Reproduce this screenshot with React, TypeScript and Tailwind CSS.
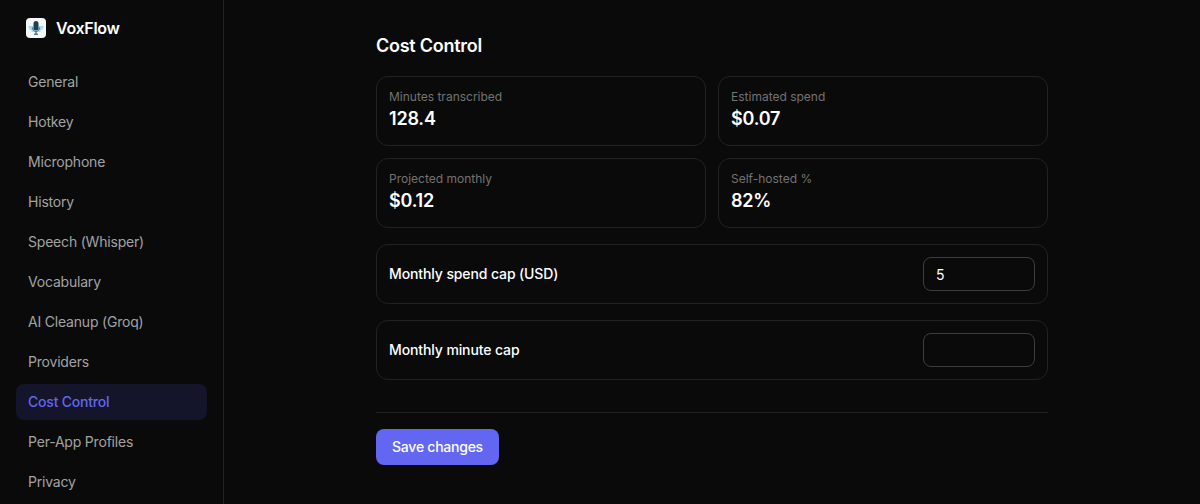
const navItems = [
  'General',
  'Hotkey',
  'Microphone',
  'History',
  'Speech (Whisper)',
  'Vocabulary',
  'AI Cleanup (Groq)',
  'Providers',
  'Cost Control',
  'Per-App Profiles',
  'Privacy',
];

const stats = [
  { label: 'Minutes transcribed', value: '128.4' },
  { label: 'Estimated spend', value: '$0.07' },
  { label: 'Projected monthly', value: '$0.12' },
  { label: 'Self-hosted %', value: '82%' },
];

function Logo() {
  return (
    <svg className="w-5 h-5 shrink-0" viewBox="0 0 20 20">
      <rect width="20" height="20" rx="4" fill="#f4f8f9" />
      <path d="M2.5 9h5M12.5 9h5M3.5 11h4.5M12 11h4.5M5.5 13h3M11.500 13h3" stroke="#4fc3d9" strokeWidth="1" />
      <rect x="7.500" y="3" width="5" height="9.500" rx="2.500" fill="#1f3f57" />
      <path d="M6.500 9.500c0 2.300 1.500 4 3.500 4s3.500-1.700 3.500-4" fill="none" stroke="#2b5069" strokeWidth="0.8" />
      <path d="M10 13.500v2.300M8 16.200h4" stroke="#1f3f57" strokeWidth="1" />
    </svg>
  );
}

function LimitRow({ label, value }: { label: string; value: string }) {
  return (
    <div className="flex items-center justify-between h-[60px] px-3 border border-[#222222] rounded-xl">
      <label className="text-sm font-medium tracking-[-0.11px] text-white">{label}</label>
      <input
        type="number"
        defaultValue={value}
        className="w-28 h-[34px] px-3 text-sm text-white bg-transparent border border-[#3d3d3d] rounded-lg outline-none"
      />
    </div>
  );
}

export default function App() {
  return (
    <div className="flex h-screen overflow-hidden bg-[#0a0a0a] font-['Inter',sans-serif]">
      {/* Sidebar */}
      <aside className="w-56 shrink-0 border-r border-[#222222] px-4">
        <div className="flex items-center gap-2.5 h-14 pl-2.5">
          <Logo />
          <span className="text-base font-semibold tracking-[-0.3px] text-white">VoxFlow</span>
        </div>
        <nav className="flex flex-col gap-1 mt-2">
          {navItems.map(item => (
            <a
              key={item}
              className={`flex items-center h-9 px-3 rounded-lg text-sm tracking-[-0.2px] ${
                item === 'Cost Control'
                  ? 'bg-[#14142a] text-[#6366f1] font-medium'
                  : 'text-[#a3a3a3]'
              }`}
            >
              {item}
            </a>
          ))}
        </nav>
      </aside>

      {/* Main content */}
      <main className="flex-1 min-w-0">
        <div className="w-[672px] mx-auto pt-8">
          <h1 className="text-lg font-semibold tracking-[-0.25px] text-white leading-7">Cost Control</h1>

          <div className="grid grid-cols-2 gap-3 mt-4">
            {stats.map(stat => (
              <div key={stat.label} className="h-[70px] px-3 pt-3 border border-[#222222] rounded-xl">
                <div className="text-xs leading-4 text-[#737373]">{stat.label}</div>
                <div className="text-lg font-semibold leading-7 tracking-[-0.2px] text-white">{stat.value}</div>
              </div>
            ))}
          </div>

          <div className="flex flex-col gap-4 mt-4">
            <LimitRow label="Monthly spend cap (USD)" value="5" />
            <LimitRow label="Monthly minute cap" value="" />
          </div>

          <div className="border-t border-[#222222] mt-8 pt-4">
            <button className="h-9 w-[123px] rounded-lg bg-[#6366f1] text-sm font-medium tracking-[-0.25px] text-white">
              Save changes
            </button>
          </div>
        </div>
      </main>
    </div>
  );
}
